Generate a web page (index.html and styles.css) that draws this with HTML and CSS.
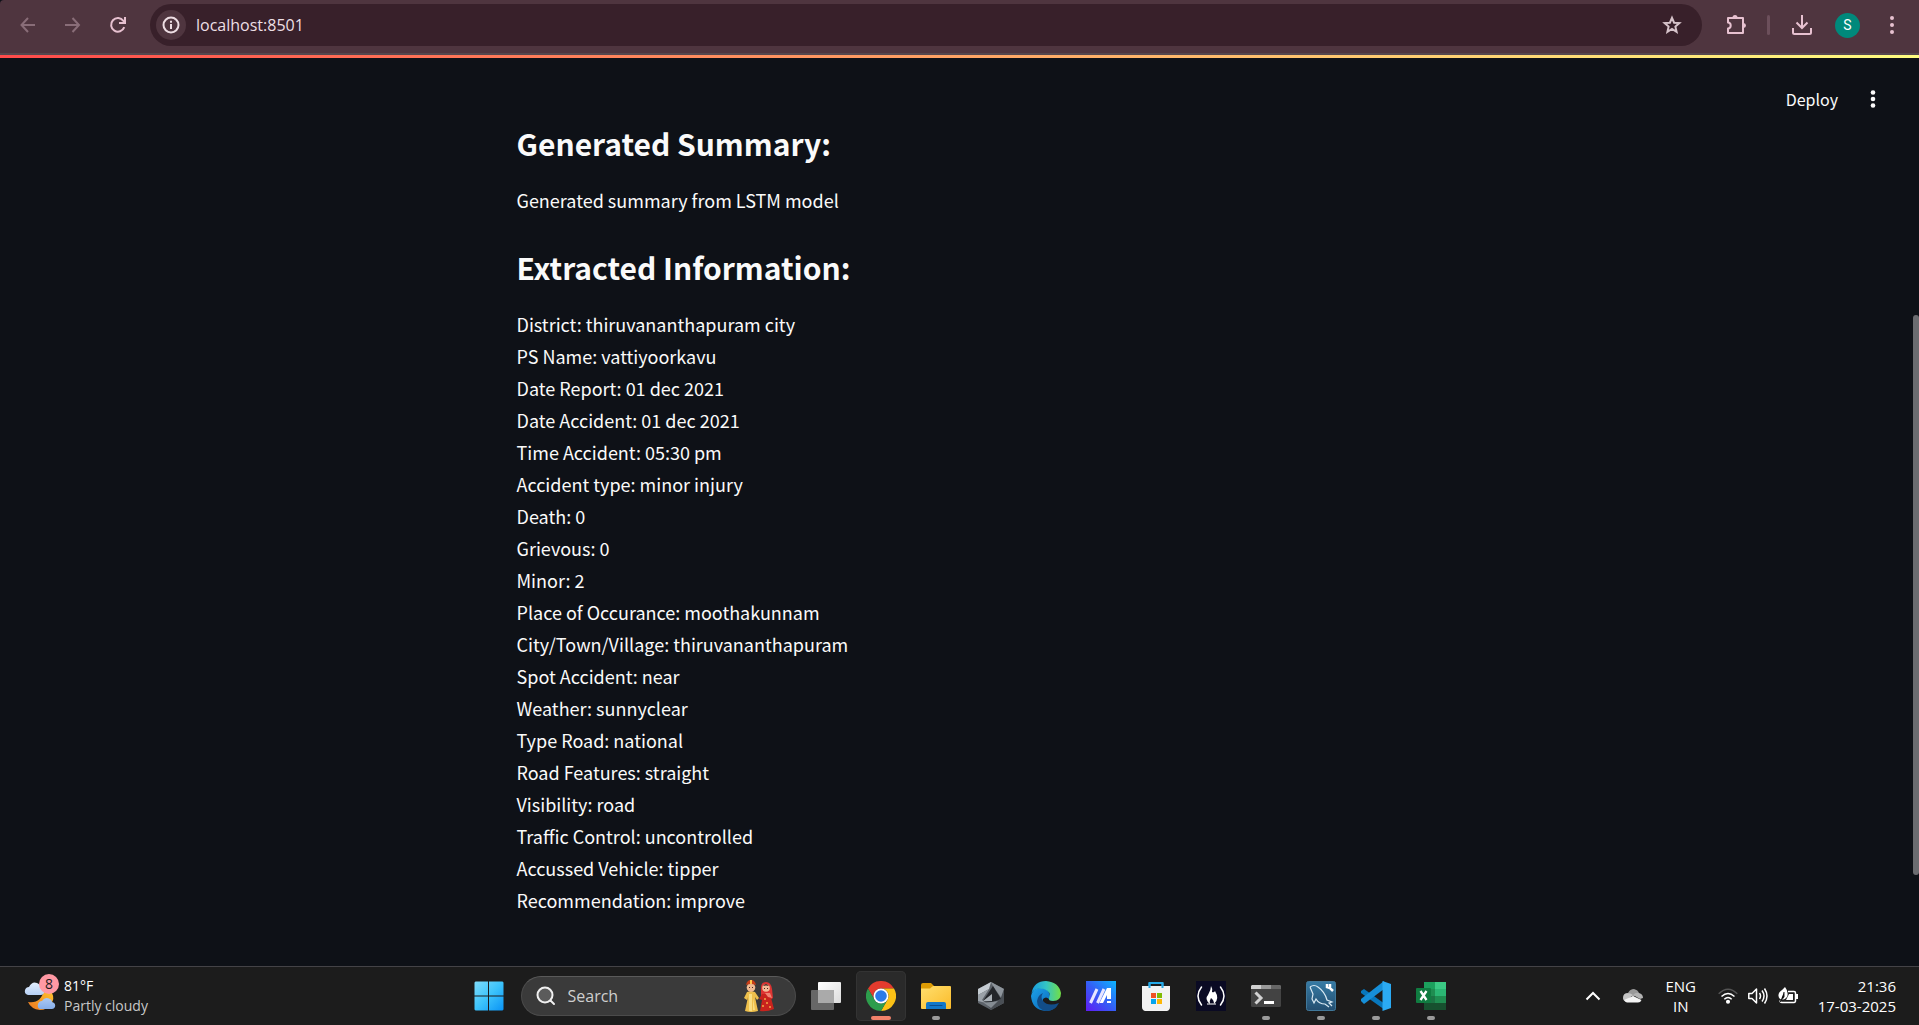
FILE: index.html
```html
<!DOCTYPE html>
<html lang="en">
<head>
<meta charset="utf-8">
<meta name="viewport" content="width=device-width, initial-scale=1">
<title>localhost:8501</title>
<link rel="stylesheet" href="styles.css">
</head>
<body>
<header class="browser">
  <nav class="browser-nav" aria-label="Browser navigation">
    <button class="tool dim" aria-label="Back"><svg width="16" height="16" viewBox="0 0 16 16" fill="none" stroke="currentColor" stroke-width="2"><path d="M15 8H2M8 1L1.500 8l6.500 7"/></svg></button>
    <button class="tool dim" aria-label="Forward"><svg width="16" height="16" viewBox="0 0 16 16" fill="none" stroke="currentColor" stroke-width="2"><path d="M0 8H14M7.500 1l6.500 7-6.500 7"/></svg></button>
    <button class="tool" aria-label="Reload"><svg width="18" height="18" viewBox="0 0 18 18" fill="none" stroke="currentColor" stroke-width="2"><path d="M15.300 11.200A6.800 6.800 0 1 1 14.400 4.800L16 6.500M16 1v6h-6"/></svg></button>
  </nav>
  <div class="address">
    <button class="site-info" aria-label="Site information"><svg width="18" height="18" viewBox="0 0 18 18" fill="none" stroke="currentColor" stroke-width="2"><circle cx="9" cy="9" r="7.500"/><path d="M9 8v5M9 4.800v2"/></svg></button>
    <input class="url" type="text" value="localhost:8501" aria-label="Address">
    <button class="star" aria-label="Bookmark"><svg width="20" height="20" viewBox="0 0 20 20" fill="none" stroke="currentColor" stroke-width="2"><path d="M10 2.800l2.100 4.900 5.300.4-4 3.500 1.200 5.200-4.600-2.800-4.600 2.800 1.200-5.200-4-3.500 5.300-.4z"/></svg></button>
  </div>
  <div class="browser-actions">
    <button class="tool" aria-label="Extensions"><svg width="22" height="22" viewBox="0 0 22 22"><path fill="none" stroke="currentColor" stroke-width="2" stroke-linejoin="round" d="M3 4h15v15H3v-4.500c3.600-.3 3.600-5.700 0-6z"/><path fill="currentColor" d="M7.500 3.500a2.500 2.500 0 0 1 5 0zM18.500 9a2.500 2.500 0 0 1 0 5z"/></svg></button>
    <span class="divider"></span>
    <button class="tool" aria-label="Downloads"><svg width="22" height="22" viewBox="0 0 22 22" fill="none" stroke="currentColor" stroke-width="2"><path d="M11 1v13M5.500 8.500L11 14l5.500-5.500M2 14v4.500q0 1.500 1.500 1.500h15q1.500 0 1.500-1.500V14"/></svg></button>
    <button class="avatar" aria-label="Profile">S</button>
    <button class="tool" aria-label="Chrome menu"><svg width="6" height="20" viewBox="0 0 6 20" fill="currentColor"><circle cx="3" cy="3" r="2"/><circle cx="3" cy="10" r="2"/><circle cx="3" cy="17" r="2"/></svg></button>
  </div>
</header>

<div class="app">
  <div class="decoration"></div>
  <div class="app-bar">
    <button class="deploy">Deploy</button>
    <button class="app-menu" aria-label="App menu"><svg width="6" height="18" viewBox="0 0 6 18" fill="currentColor"><circle cx="3" cy="2.500" r="2.300"/><circle cx="3" cy="9" r="2.300"/><circle cx="3" cy="15.500" r="2.300"/></svg></button>
  </div>
  <main class="report">
    <h2>Generated Summary:</h2>
    <p>Generated summary from LSTM model</p>
    <h2>Extracted Information:</h2>
    <ul>
      <li>District: thiruvananthapuram city</li>
      <li>PS Name: vattiyoorkavu</li>
      <li>Date Report: 01 dec 2021</li>
      <li>Date Accident: 01 dec 2021</li>
      <li>Time Accident: 05:30 pm</li>
      <li>Accident type: minor injury</li>
      <li>Death: 0</li>
      <li>Grievous: 0</li>
      <li>Minor: 2</li>
      <li>Place of Occurance: moothakunnam</li>
      <li>City/Town/Village: thiruvananthapuram</li>
      <li>Spot Accident: near</li>
      <li>Weather: sunnyclear</li>
      <li>Type Road: national</li>
      <li>Road Features: straight</li>
      <li>Visibility: road</li>
      <li>Traffic Control: uncontrolled</li>
      <li>Accussed Vehicle: tipper</li>
      <li>Recommendation: improve</li>
    </ul>
  </main>
  <div class="scroll-thumb"></div>
</div>

<footer class="taskbar">
  <button class="weather">
    <span class="weather-icon">
      <svg width="36" height="36" viewBox="0 0 36 36">
        <defs>
          <linearGradient id="moon" x1="1" y1="0" x2="0" y2="1"><stop offset="0" stop-color="#ffc52e"/><stop offset="1" stop-color="#ee7620"/></linearGradient>
          <linearGradient id="cloud" x1="0" y1="0" x2="0" y2="1"><stop offset="0" stop-color="#e3efff"/><stop offset="1" stop-color="#86aeea"/></linearGradient>
        </defs>
        <path fill="url(#moon)" d="M5 24q13 2 16-12l8 3q3 6-1 11-4 6-11 6-9-1-12-8z"/>
        <path fill="url(#cloud)" d="M5 17q-4-1-3-5 1-3 4-3 3-6 8-4 4 2 4 5 4 1 3 5-1 2-3 2zM17 31q-3-1-2-5 1-3 4-3 3-5 8-2 2 1 2 3 4 1 3 5-1 2-3 2z"/>
      </svg>
      <span class="weather-count">8</span>
    </span>
    <span class="weather-text"><span>81°F</span><span class="muted">Partly cloudy</span></span>
  </button>

  <div class="dock">
    <button class="task start" aria-label="Start"><svg width="30" height="30" viewBox="0 0 30 30"><defs><linearGradient id="win" x1="0" y1="0" x2="1" y2="1"><stop offset="0" stop-color="#7fdcfb"/><stop offset=".5" stop-color="#3cc3fb"/><stop offset="1" stop-color="#0a93f5"/></linearGradient></defs><path fill="url(#win)" d="M1.500.5H14v14H.5v-13zM15 .5h13.500l1 1v13H15zM.5 15.500H14v14H1.500l-1-1zM15 15.500h14.500v13l-1 1H15z"/></svg></button>
    <label class="search">
      <svg width="20" height="20" viewBox="0 0 20 20" fill="#5b5b5b" stroke="#f0f0f0" stroke-width="2" stroke-linecap="round"><circle cx="9" cy="9" r="7.500"/><path d="M14.500 14.500L18 18"/></svg>
      <input type="text" placeholder="Search" aria-label="Search">
      <svg width="32" height="32" viewBox="0 0 32 32">
        <path fill="#eec04c" d="M4 12l-3 6 3 2 1-3-3 14q6 2 13 0l-3-14 2 3 2-2-4-6-4-1z"/><path fill="#f9df83" d="M6 14h3v17H6zM10 18l2 12h-2z"/>
        <circle cx="8" cy="7.500" r="4.300" fill="#f0bb92"/><path fill="#c83e18" d="M3 5q1-5 5-5t5 5q-5-2-10 0z"/><path fill="#ffc34a" d="M7 0h2v4H7z"/><path fill="#4c2b23" d="M6 7h1v1H6zM9 7h1v1H9z"/>
        <path fill="#dc3432" d="M18 8q0-6 5-6t6 7l1 9-3 2-9-2z"/><circle cx="23" cy="8" r="3.800" fill="#f3bb97"/><path fill="#4c2b23" d="M20 6q3-4 6 0-3-1-6 0zM21 8h1v1h-1zM24 8h1v1h-1z"/>
        <path fill="#c9231d" d="M19 14l-3 5 3 1-2 11q7 1 14-2l-4-15z"/><path fill="#f08472" d="M22 13h5l2 5-4-1z"/><g fill="#f3a947"><circle cx="20" cy="26" r="1"/><circle cx="24" cy="23" r="1"/><circle cx="27" cy="27" r="1"/><circle cx="22" cy="19" r="1"/></g>
      </svg>
    </label>
    <button class="task" aria-label="Task view"><svg width="30" height="30" viewBox="0 0 30 30"><defs><linearGradient id="tv" x1="0" y1="0" x2="1" y2="1"><stop offset="0" stop-color="#fff"/><stop offset="1" stop-color="#dcdcdc"/></linearGradient></defs><rect x="7" y="1" width="23" height="21" rx="1" fill="url(#tv)"/><rect y="9" width="23" height="20" rx="1" fill="#676767"/><path d="M7 9h16v13H7z" fill="#aaa"/></svg></button>
    <button class="task active" aria-label="Google Chrome"><svg width="30" height="30" viewBox="0 0 30 30"><path fill="#e33b2e" d="M2 7.500A15 15 0 0 1 28 7.500H15a7.500 7.500 0 0 0-6.500 11.200z"/><path fill="#fbc116" d="M28 7.500A15 15 0 0 1 15 30l6.500-11.250A7.500 7.500 0 0 0 15 7.500z"/><path fill="#2d9d4c" d="M2 7.500A15 15 0 0 0 15 30l6.500-11.250a7.500 7.500 0 0 1-13 0z"/><circle cx="15" cy="15" r="7.500" fill="#fff"/><circle cx="15" cy="15" r="5.800" fill="#2c7ae9"/></svg></button>
    <button class="task open" aria-label="File Explorer"><svg width="30" height="30" viewBox="0 0 30 30"><defs><linearGradient id="fold" x1="0" y1="0" x2="1" y2="1"><stop offset="0" stop-color="#ffdf6e"/><stop offset="1" stop-color="#fbbb2a"/></linearGradient></defs><path fill="#dc9b04" d="M0 4q0-2 2-2h8l3 3v6H0z"/><path fill="url(#fold)" d="M0 7.500h9L12 5h17q1 0 1 1v21q0 1-1 1H1q-1 0-1-1z"/><path fill="#1177c9" d="M5 28v-5q0-2 2-2h16q2 0 2 2v5z"/><path d="M9 24.500h12" stroke="#0a4d91" stroke-linecap="round"/></svg></button>
    <button class="task" aria-label="Armoury"><svg width="30" height="30" viewBox="0 0 30 30"><path fill="#5d636a" d="M15 1l13 7v14l-13 7-13-7V8z"/><path fill="#c5ccd2" d="M15 1L2 8v6l11-6z"/><path fill="#8d949b" d="M15 1l13 7-2 10-9-13z"/><path fill="#9aa1a8" d="M2 14l11-6-7 11 4 3-8-2z"/><path fill="#4a4f55" d="M28 8v14l-13 7-5-7 14-3z"/><path fill="#22252a" d="M17 5l8 13-8 3-10-1z"/><path fill="#aab1b7" d="M7 20l9-7v7z"/><path fill="#858c93" d="M8 22l14-2-7 7z"/></svg></button>
    <button class="task" aria-label="Microsoft Edge"><svg width="30" height="30" viewBox="0 0 30 30"><defs><linearGradient id="ed" x1="0" y1="0" x2="1" y2="0"><stop offset="0" stop-color="#189be0"/><stop offset=".5" stop-color="#34c4c5"/><stop offset="1" stop-color="#72df45"/></linearGradient><linearGradient id="eb" x1="0" y1="0" x2="1" y2="1"><stop stop-color="#1da2e9"/><stop offset="1" stop-color="#0860b2"/></linearGradient></defs><path fill="url(#eb)" d="M0 15Q2 6 11 7q7 1 8 8 0 2-1 3-3-3-6 0-1 9 13 8Q21 30 15 30 1 29 0 15z"/><path fill="#124d88" d="M12 12q-3 4 0 8 5 6 16 2-4 8-13 8-9-2-9-10 1-6 6-8z"/><path fill="url(#ed)" d="M.5 12Q3 0 15 0q13 1 15 12 0 8-8 8-5 0-4-3 3-6-5-9-8-2-12.500 4z"/></svg></button>
    <button class="task" aria-label="MyASUS"><svg width="30" height="30" viewBox="0 0 30 30"><defs><linearGradient id="ma" x1="0" y1="1" x2="1" y2="0"><stop stop-color="#611bf4"/><stop offset=".5" stop-color="#345ff5"/><stop offset="1" stop-color="#0bb6ff"/></linearGradient></defs><path fill="url(#ma)" d="M0 0h30v30H0z"/><path fill="none" stroke="#e7e5ff" stroke-width="3" d="M4.500 22L11 8M11.500 22L18 8"/><path fill="#fff" d="M21 7h4v11h-4v-4l-4 8h-3.500zM21 20h4v2h-4z"/></svg></button>
    <button class="task" aria-label="Microsoft Store"><svg width="30" height="30" viewBox="0 0 30 30"><path fill="none" stroke="#25a9e7" stroke-width="2" d="M8.500 8V2h13v6"/><path fill="#f2f2f2" d="M1 5h28v21q0 3-3 4H4q-3-1-3-4z"/><path stroke="#25a9e7" stroke-width="2" d="M8.500 2v5M21.500 2v5"/><path fill="#f15124" d="M10 12h5v5h-5z"/><path fill="#80bb04" d="M16 12h5v5h-5z"/><path fill="#05a5ee" d="M10 18h5v5h-5z"/><path fill="#fdb706" d="M16 18h5v5h-5z"/></svg></button>
    <button class="task" aria-label="freeCodeCamp"><svg width="30" height="30" viewBox="0 0 30 30"><path fill="#0a0a23" d="M0 0h30v30H0z"/><path fill="none" stroke="#fff" stroke-width="1.500" stroke-linecap="round" d="M5.500 6q-7 9 0 18M24.500 6q7 9 0 18"/><path fill="#fff" d="M15 5q2 3 1 6 2 1 3-1 5 8-1 13 0-4-3-6-2 3-1 6-6-5-2-9 3-5 3-9z"/><path stroke="#fff" d="M11 23h9"/></svg></button>
    <button class="task open" aria-label="Terminal"><svg width="30" height="30" viewBox="0 0 30 30"><rect y="4" width="30" height="22" rx="1.500" fill="#434343"/><path fill="#d0d0d0" d="M1 4h9v4H0V5z"/><path fill="#999" d="M10 4h10v4H10z"/><path fill="#666" d="M20 4h9l1 1v3H20z"/><path fill="none" stroke="#d2d2d2" stroke-width="3" d="M4.500 11.500l5.500 5.500-5.500 5.500"/><path fill="#fff" d="M13 20h10v3H13z"/></svg></button>
    <button class="task open" aria-label="MySQL Workbench"><svg width="30" height="30" viewBox="0 0 30 30"><defs><linearGradient id="sq" x1="0" y1="0" x2="0" y2="1"><stop stop-color="#367ba5"/><stop offset="1" stop-color="#244e70"/></linearGradient></defs><rect x=".5" y=".5" width="29" height="29" rx="2" fill="url(#sq)" stroke="#41789a"/><path fill="none" stroke="#d9e9f3" stroke-width="1.200" d="M4 6q4-3 8 0 7 5 9 13l5 2-3 1 3 3M4 6l3 7-1 5 2 4 2-4q3 5 9 5l4 3"/><path fill="none" stroke="#fff" stroke-width="2.500" d="M21 3v3l3 1 3 3M24 3v4"/></svg></button>
    <button class="task open" aria-label="Visual Studio Code"><svg width="30" height="30" viewBox="0 0 30 30"><path fill="#0877bc" d="M0 10l3-2 21 15v6L0 12z"/><path fill="#168fd8" d="M0 20l3 3L23 8V0L0 18z"/><path fill="#2baaf3" d="M21.500 0L30 3v24l-8.500 3z"/></svg></button>
    <button class="task open" aria-label="Excel"><svg width="30" height="30" viewBox="0 0 30 30"><path fill="#1f8d51" d="M8 1h22v28H8z"/><path fill="#2bb673" d="M19 1h11v14H19z"/><path fill="#3bc984" d="M19 1h11v7H19z"/><path fill="#1ca05d" d="M8 1h11v7H8z"/><path fill="#1b7444" d="M8 15h11v14H8z"/><path fill="#17502f" d="M8 22h22v7H8z"/><rect y="7" width="15" height="15" rx="1" fill="#107c41"/><path stroke="#fff" stroke-width="2.300" d="M4.500 10l6 9M10.500 10l-6 9"/></svg></button>
  </div>

  <div class="tray">
    <button class="tray-button" aria-label="Hidden icons"><svg width="16" height="10" viewBox="0 0 16 10" fill="none" stroke="currentColor" stroke-width="2"><path d="M1.500 8.500L8 2l6.500 6.500"/></svg></button>
    <button class="tray-button" aria-label="OneDrive"><svg width="20" height="14" viewBox="0 0 20 14"><path fill="#999" d="M5 4q2-4 6-4 4 1 5 4l-6 4z"/><path fill="#c4c4c4" d="M0 9q0-5 5-5 2 0 5 2l-7 6q-3 0-3-3z"/><path fill="#b2b2b2" d="M10 6q3-3 6-2 4 1 4 5l-3 1z"/><path fill="#f4f4f4" d="M1 11l9-4 8.500 4q-1 2.500-3.500 2.500H4Q2 13 1 11z"/></svg></button>
    <button class="language"><span>ENG</span><span>IN</span></button>
    <button class="status" aria-label="Network, sound and battery">
      <svg width="20" height="18" viewBox="0 0 20 18" fill="none" stroke="currentColor" stroke-width="1.500"><path stroke="#555" d="M.7 6.700q9.300-9 18.600 0"/><path d="M3.500 9.500q6.500-6 13 0M6.300 12.300q3.700-3.500 7.400 0"/><circle cx="10" cy="14.800" r="1.300" fill="currentColor"/></svg>
      <svg width="20" height="18" viewBox="0 0 20 18" fill="none" stroke="currentColor" stroke-width="1.500" stroke-linejoin="round"><path d="M.8 6.500H4L8.500 2v14L4 11.500H.8zM11.500 6q2 3 0 6M14 3.500q4 5.500 0 11M16.500 1.500q5 7.500 0 15"/></svg>
      <svg width="20" height="18" viewBox="0 0 20 18"><path fill="none" stroke="currentColor" stroke-width="1.500" d="M10 4.500h6q1.500 0 1.500 1.500v7.500q0 2-1.500 2H4q-2 0-2-2"/><path fill="currentColor" d="M18 7h2v5h-2zM11 7h4v6H8zM7 0q4 5 2 10-3 4-7 2-4-5 2-9z"/><path stroke="#1c1c1c" d="M6 5v5l-4 5"/></svg>
    </button>
    <button class="clock"><span>21:36</span><span>17-03-2025</span></button>
  </div>
</footer>
</body>
</html>
```

FILE: styles.css
```css
* { box-sizing: border-box; }

body {
  margin: 0;
  min-height: 100vh;
  display: flex;
  flex-direction: column;
  background: #0e1117;
  color: #fafafa;
  font-family: "Open Sans", sans-serif;
}

button, input {
  margin: 0;
  padding: 0;
  border: 0;
  background: none;
  color: inherit;
  font: inherit;
}

svg { display: block; flex: none; }

/* Browser toolbar */
.browser {
  display: flex;
  align-items: center;
  height: 55px;
  padding: 4px 7px 7px 8px;
  background: #4f353f;
  border-bottom: 2px solid #55474e;
  border-top-left-radius: 4px;
  color: #e7c1d0;
}

.browser-nav { display: flex; gap: 5px; }

.tool {
  width: 40px;
  height: 40px;
  display: grid;
  place-items: center;
}

.dim { color: #896d78; }

.address {
  flex: 1;
  display: flex;
  align-items: center;
  height: 42px;
  margin: 0 14px 0 12px;
  padding: 0 20px 0 6px;
  border-radius: 21px;
  background: #38202a;
}

.site-info {
  width: 30px;
  height: 30px;
  display: grid;
  place-items: center;
  border-radius: 50%;
  background: #4f353f;
  color: #eddde3;
}

.url {
  flex: 1;
  min-width: 0;
  padding-left: 10px;
  font-size: 16px;
  color: #eddfe4;
}

.star { color: #d6c3ca; }

.browser-actions { display: flex; align-items: center; }

.divider {
  width: 3px;
  height: 20px;
  margin: 0 12px 0 11px;
  border-radius: 2px;
  background: #6c4f5b;
}

.avatar {
  width: 25px;
  height: 25px;
  margin: 0 12px 0 13px;
  border-radius: 50%;
  background: #00897b;
  color: #fff;
  font-family: Roboto, sans-serif;
  font-size: 14px;
}

/* Streamlit page */
.app {
  flex: 1;
  position: relative;
  padding-right: 6px;
  font-family: "Noto Sans CJK SC", sans-serif;
}

.decoration {
  height: 3px;
  margin-right: -6px;
  background: linear-gradient(90deg, #ff4b4b, #fffd80);
}

.app-bar {
  display: flex;
  justify-content: flex-end;
  gap: 16px;
  padding: 23px 21px 0;
}

.deploy { height: 36px; font-size: 16px; }

.app-menu {
  width: 38px;
  height: 36px;
  display: grid;
  place-items: center;
}

.report {
  width: 100%;
  max-width: 880px;
  margin: 0 auto;
  padding-bottom: 48px;
  font-size: 18px;
  line-height: 32px;
}

.report h2 {
  margin: 0 0 15px;
  font-size: 30px;
  line-height: 52px;
  font-weight: 600;
}

.report p { margin: 0 0 25px; }

.report ul {
  margin: 0;
  padding: 0;
  list-style: none;
}

.scroll-thumb {
  position: absolute;
  top: 28.5%;
  right: 0;
  width: 6px;
  height: 61.5%;
  border-radius: 3px;
  background: #6b6c70;
}

/* Taskbar */
.taskbar {
  display: grid;
  grid-template-columns: 1fr auto 1fr;
  align-items: center;
  padding: 4px 23px;
  border-top: 1px solid #444347;
  background: #1c1c1c;
  color: #fff;
  font-size: 14px;
  line-height: 20px;
}

.weather {
  display: flex;
  align-items: center;
  gap: 5px;
  text-align: left;
}

.weather-icon { position: relative; }

.weather-count {
  position: absolute;
  top: -4px;
  right: 0;
  width: 20px;
  height: 20px;
  border-radius: 50%;
  background: #ff99a4;
  color: #1c1c1c;
  text-align: center;
}

.weather-text, .language, .clock { display: flex; flex-direction: column; }

.muted { color: #c8c8c8; }

.dock { display: flex; align-items: center; gap: 5px; }

.task {
  position: relative;
  width: 50px;
  height: 50px;
  display: grid;
  place-items: center;
  border-radius: 5px;
}

.start { margin-right: 2px; }

.active {
  background: #2a2a2a;
  box-shadow: inset 0 0 0 1px #333;
}

.open::after, .active::after {
  content: "";
  position: absolute;
  bottom: 1px;
  left: 21px;
  width: 8px;
  height: 4px;
  border-radius: 2px;
  background: #9a9a9a;
}

.active::after {
  left: 15px;
  width: 20px;
  background: #f2826a;
}

.search {
  display: flex;
  align-items: center;
  gap: 12px;
  width: 275px;
  height: 40px;
  padding: 0 20px 0 14px;
  border: 1px solid #4b4b4b;
  border-top-color: #5a5a5a;
  border-radius: 20px;
  background: #3a3a3a;
}

.search input {
  flex: 1;
  min-width: 0;
  font-size: 16px;
}

.search input::placeholder { color: #cfcfcf; opacity: 1; }

.tray {
  display: flex;
  align-items: center;
  justify-content: flex-end;
  font-size: 15px;
}

.tray-button {
  width: 40px;
  height: 40px;
  display: grid;
  place-items: center;
}

.language {
  width: 56px;
  align-items: center;
}

.status {
  display: flex;
  gap: 10px;
  padding: 0 20px 0 9px;
}

.clock { align-items: flex-end; text-align: right; }
```
